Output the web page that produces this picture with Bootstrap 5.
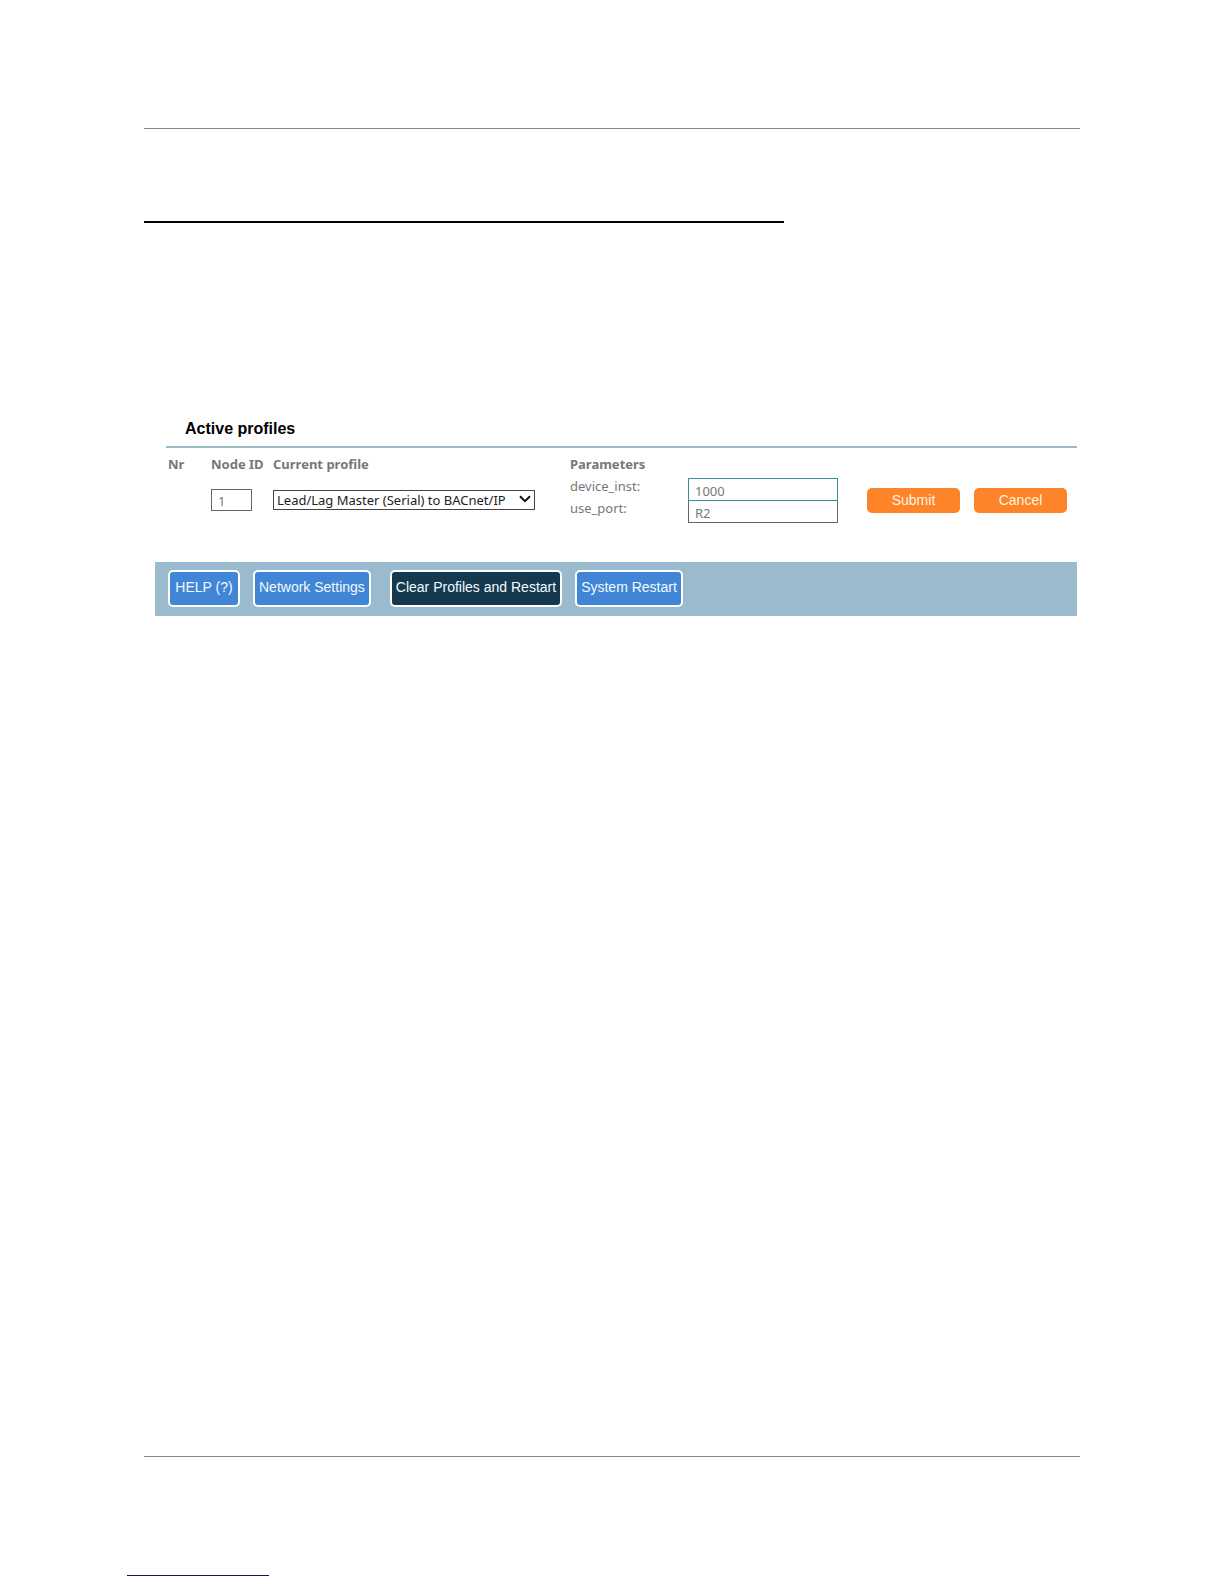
<!DOCTYPE html>
<html lang="en">
<head>
<meta charset="utf-8">
<meta name="viewport" content="width=device-width, initial-scale=1">
<title>Active profiles</title>
<link href="https://cdn.jsdelivr.net/npm/bootstrap@5.3.0/dist/css/bootstrap.min.css" rel="stylesheet">
<style>
  body { background: #fff; color: #777; font: 13px/16px "Noto Sans", sans-serif; }
  .sheet { padding: 128px 144px 0; }
  .page-rule { border-top: 1px solid #858585; }
  .title-rule { width: 640px; max-width: 100%; margin-top: 92px; border-top: 2px solid #000; }
  .panel { margin: 192px 3px 0 11px; }
  .panel-title { margin: 0 0 0 30px; padding: 4px 0 7px; font: bold 16px/20px "Liberation Sans", sans-serif; color: #000; }
  .profiles { margin-left: 11px; border-top: 2px solid #9abac6; }
  .profiles table { width: 100%; table-layout: fixed; }
  .profiles th, .profiles td { padding: 0 2px; }
  .profiles th { padding-top: 8px; padding-bottom: 6px; font-weight: bold; white-space: nowrap; }
  .col-nr { width: 43px; }
  .col-node { width: 62px; }
  .col-profile { width: 297px; }
  .col-params { width: 272px; }
  .profiles .form-control { height: 22px; min-height: 0; padding: 2px 6px 0; border: 1px solid #666; border-radius: 0; font: 13px/16px "Noto Sans", sans-serif; color: #777; }
  .profiles .node-box { width: 41px; }
  .profiles .param-box { width: 150px; height: 23px; }
  .profiles .param-box.current { position: relative; border-color: #3f909f; }
  .param-line { height: 22px; }
  .param-line label { width: 118px; }
  .profiles .form-select { width: 262px; height: 20px; padding: 0 20px 0 3px; border: 1px solid #444; border-radius: 0; font: 13px/16px "Noto Sans", sans-serif; color: #222;
    background-image: url("data:image/svg+xml,%3csvg xmlns='http://www.w3.org/2000/svg' viewBox='0 0 12 8'%3e%3cpath d='M1 1.2l5 5 5-5' fill='none' stroke='%23111' stroke-width='2'/%3e%3c/svg%3e");
    background-size: 12px 8px; background-position: right 3px top 4px; }
  .btn { --bs-btn-font-family: "Liberation Sans", sans-serif; --bs-btn-font-size: 14px; --bs-btn-line-height: 16px; white-space: nowrap; }
  .btn-action { --bs-btn-bg: #fe8429; --bs-btn-color: #fff4e0; --bs-btn-border-color: #fe8429; --bs-btn-hover-bg: #e87118; --bs-btn-hover-color: #fff; --bs-btn-padding-y: 4px; --bs-btn-padding-x: 0; --bs-btn-border-width: 0; --bs-btn-border-radius: 5px; width: 93px; height: 25px; }
  .toolbar { margin-top: 40px; padding: 8px 13px 9px; background: #99bbcd; gap: 13px; }
  .btn-tool { --bs-btn-bg: #4186d6; --bs-btn-color: #f2faff; --bs-btn-border-color: #fff; --bs-btn-hover-bg: #2f70bb; --bs-btn-hover-color: #fff; --bs-btn-hover-border-color: #fff; --bs-btn-border-width: 2px; --bs-btn-padding-y: 7px; --bs-btn-padding-x: 4px; --bs-btn-border-radius: 5px; min-width: 72px; height: 37px; padding-bottom: 10px; }
  .btn-tool.dark { --bs-btn-bg: #153a50; --bs-btn-hover-bg: #0d2a3b; margin-left: 6px; }
  .sheet-foot { margin-top: 840px; }
  .foot-link { width: 142px; margin: 118px 0 8px -17px; border-top: 1px solid #11117a; }
</style>
<script src="https://cdn.jsdelivr.net/npm/bootstrap@5.3.0/dist/js/bootstrap.bundle.min.js" defer></script>
</head>
<body>
<div class="sheet">
  <header>
    <div class="page-rule"></div>
    <div class="title-rule"></div>
  </header>

  <main class="panel">
    <h1 class="panel-title">Active profiles</h1>
    <form class="profiles">
      <table>
        <colgroup><col class="col-nr"><col class="col-node"><col class="col-profile"><col class="col-params"><col></colgroup>
        <thead>
          <tr><th>Nr</th><th>Node ID</th><th>Current profile</th><th>Parameters</th><th></th></tr>
        </thead>
        <tbody>
          <tr>
            <td></td>
            <td><input class="form-control node-box" type="text" value="1" aria-label="Node ID"></td>
            <td>
              <select class="form-select" aria-label="Current profile">
                <option>Lead/Lag Master (Serial) to BACnet/IP</option>
              </select>
            </td>
            <td>
              <div class="param-line d-flex align-items-start">
                <label for="device-inst">device_inst:</label>
                <input class="form-control param-box current" id="device-inst" type="text" value="1000">
              </div>
              <div class="param-line d-flex align-items-start">
                <label for="use-port">use_port:</label>
                <input class="form-control param-box" id="use-port" type="text" value="R2">
              </div>
            </td>
            <td>
              <div class="d-flex justify-content-end pe-2" style="gap: 14px">
                <button class="btn btn-action" type="submit">Submit</button>
                <button class="btn btn-action" type="button">Cancel</button>
              </div>
            </td>
          </tr>
        </tbody>
      </table>
    </form>

    <div class="toolbar d-flex flex-wrap">
      <button class="btn btn-tool" type="button">HELP (?)</button>
      <button class="btn btn-tool" type="button">Network Settings</button>
      <button class="btn btn-tool dark" type="button">Clear Profiles and Restart</button>
      <button class="btn btn-tool" type="button">System Restart</button>
    </div>
  </main>

  <footer class="sheet-foot">
    <div class="page-rule"></div>
    <div class="foot-link"></div>
  </footer>
</div>
</body>
</html>
